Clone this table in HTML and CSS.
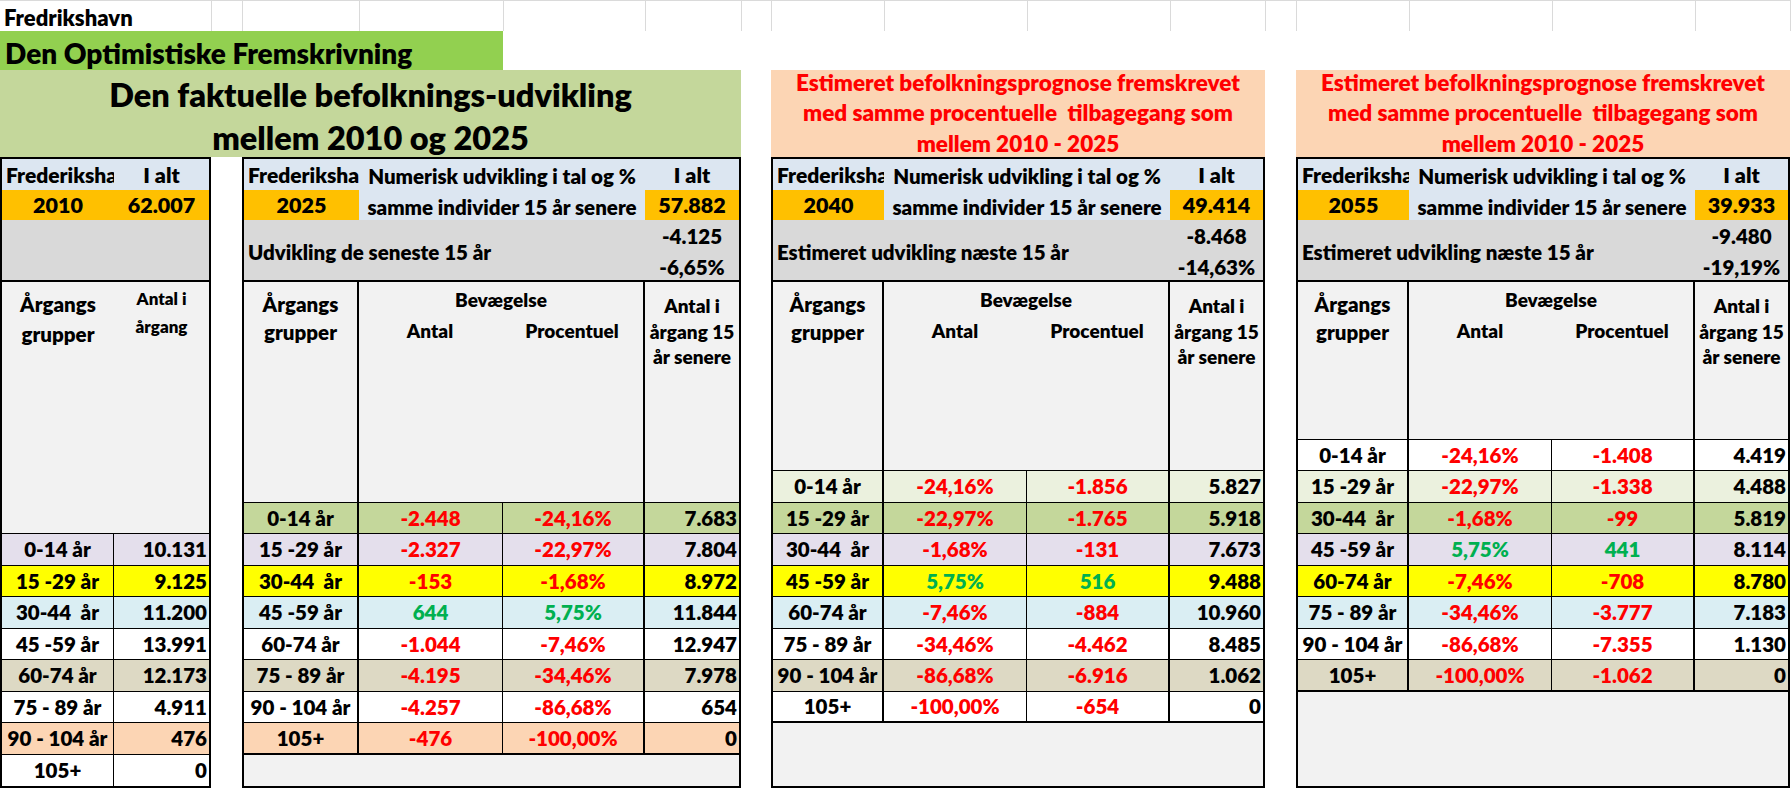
FILE: index.html
```html
<!DOCTYPE html>
<html lang="da">
<head>
<meta charset="utf-8">
<title>Fredrikshavn – Den Optimistiske Fremskrivning</title>
<link rel="stylesheet" href="styles.css">
</head>
<body>
<div class="sheet">
  <div class="row1">
    <div class="r1-first">Fredrikshavn</div>
    <div class="r1-cell w31"></div>
    <div class="r1-cell w117"></div>
    <div class="r1-cell w144"></div>
    <div class="r1-cell w142"></div>
    <div class="r1-cell w96"></div>
    <div class="r1-cell w30"></div>
    <div class="r1-cell w113"></div>
    <div class="r1-cell w143"></div>
    <div class="r1-cell w143"></div>
    <div class="r1-cell w95"></div>
    <div class="r1-cell w31"></div>
    <div class="r1-cell w113"></div>
    <div class="r1-cell w143"></div>
    <div class="r1-cell w143"></div>
    <div class="r1-cell w95"></div>
    <div class="r1-cell w1"></div>
  </div>

  <div class="row2"><div class="green-bar">Den Optimistiske Fremskrivning</div></div>

  <div class="main">
    <section class="group-left">
      <div class="title-box">Den faktuelle befolknings-udvikling<br>mellem 2010 og 2025</div>
      <div class="pair">
        <!-- Table 1 -->
        <div class="tbl t1">
          <div class="c-name">Frederiksha</div>
          <div class="c-key">I alt</div>
          <div class="c-year">2010</div>
          <div class="c-year">62.007</div>
          <div class="c-gray span2"></div>
          <div class="h1-group">Årgangs<br>grupper</div>
          <div class="h1-count">Antal i<br>årgang</div>

          <div class="row lav"><div class="d1">0-14 år</div><div class="d1n">10.131</div></div>
          <div class="row yel"><div class="d1">15 -29 år</div><div class="d1n">9.125</div></div>
          <div class="row aqua"><div class="d1">30-44  år</div><div class="d1n">11.200</div></div>
          <div class="row wht"><div class="d1">45 -59 år</div><div class="d1n">13.991</div></div>
          <div class="row tan"><div class="d1">60-74 år</div><div class="d1n">12.173</div></div>
          <div class="row wht"><div class="d1">75 - 89 år</div><div class="d1n">4.911</div></div>
          <div class="row pch"><div class="d1">90 - 104 år</div><div class="d1n">476</div></div>
          <div class="row wht last"><div class="d1">105+</div><div class="d1n">0</div></div>
        </div>

        <!-- Table 2 -->
        <div class="tbl t2">
          <div class="c-name">Frederiksha</div>
          <div class="c-desc span2">Numerisk udvikling i tal og %</div>
          <div class="c-key">I alt</div>
          <div class="c-year">2025</div>
          <div class="c-desc span2">samme individer 15 år senere</div>
          <div class="c-year">57.882</div>
          <div class="c-gray span3">Udvikling de seneste 15 år</div>
          <div class="c-vals"><span>-4.125</span><span>-6,65%</span></div>
          <div class="h-group">Årgangs<br>grupper</div>
          <div class="h-move span2">
            <div class="h-move-title">Bevægelse</div>
            <div class="h-move-sub"><span>Antal</span><span>Procentuel</span></div>
          </div>
          <div class="h-count">Antal i<br>årgang 15<br>år senere</div>

          <div class="row olv"><div class="d">0-14 år</div><div class="d neg">-2.448</div><div class="d neg">-24,16%</div><div class="dn">7.683</div></div>
          <div class="row lav"><div class="d">15 -29 år</div><div class="d neg">-2.327</div><div class="d neg">-22,97%</div><div class="dn">7.804</div></div>
          <div class="row yel"><div class="d">30-44  år</div><div class="d neg">-153</div><div class="d neg">-1,68%</div><div class="dn">8.972</div></div>
          <div class="row aqua"><div class="d">45 -59 år</div><div class="d pos">644</div><div class="d pos">5,75%</div><div class="dn">11.844</div></div>
          <div class="row wht"><div class="d">60-74 år</div><div class="d neg">-1.044</div><div class="d neg">-7,46%</div><div class="dn">12.947</div></div>
          <div class="row tan"><div class="d">75 - 89 år</div><div class="d neg">-4.195</div><div class="d neg">-34,46%</div><div class="dn">7.978</div></div>
          <div class="row wht"><div class="d">90 - 104 år</div><div class="d neg">-4.257</div><div class="d neg">-86,68%</div><div class="dn">654</div></div>
          <div class="row pch last"><div class="d">105+</div><div class="d neg">-476</div><div class="d neg">-100,00%</div><div class="dn">0</div></div>
          <div class="filler"></div>
        </div>
      </div>
    </section>

    <section class="panel gap30">
      <div class="peach">Estimeret befolkningsprognose fremskrevet<br>med samme procentuelle&nbsp; tilbagegang som<br>mellem 2010 - 2025</div>
      <div class="tbl t3">
        <div class="c-name">Frederiksha</div>
        <div class="c-desc span2">Numerisk udvikling i tal og %</div>
        <div class="c-key">I alt</div>
        <div class="c-year">2040</div>
        <div class="c-desc span2">samme individer 15 år senere</div>
        <div class="c-year">49.414</div>
        <div class="c-gray span3">Estimeret udvikling næste 15 år</div>
        <div class="c-vals"><span>-8.468</span><span>-14,63%</span></div>
        <div class="h-group">Årgangs<br>grupper</div>
        <div class="h-move span2">
          <div class="h-move-title">Bevægelse</div>
          <div class="h-move-sub"><span>Antal</span><span>Procentuel</span></div>
        </div>
        <div class="h-count">Antal i<br>årgang 15<br>år senere</div>

        <div class="row lgr"><div class="d">0-14 år</div><div class="d neg">-24,16%</div><div class="d neg">-1.856</div><div class="dn">5.827</div></div>
        <div class="row olv"><div class="d">15 -29 år</div><div class="d neg">-22,97%</div><div class="d neg">-1.765</div><div class="dn">5.918</div></div>
        <div class="row lav"><div class="d">30-44  år</div><div class="d neg">-1,68%</div><div class="d neg">-131</div><div class="dn">7.673</div></div>
        <div class="row yel"><div class="d">45 -59 år</div><div class="d pos">5,75%</div><div class="d pos">516</div><div class="dn">9.488</div></div>
        <div class="row aqua"><div class="d">60-74 år</div><div class="d neg">-7,46%</div><div class="d neg">-884</div><div class="dn">10.960</div></div>
        <div class="row wht"><div class="d">75 - 89 år</div><div class="d neg">-34,46%</div><div class="d neg">-4.462</div><div class="dn">8.485</div></div>
        <div class="row tan"><div class="d">90 - 104 år</div><div class="d neg">-86,68%</div><div class="d neg">-6.916</div><div class="dn">1.062</div></div>
        <div class="row wht last"><div class="d">105+</div><div class="d neg">-100,00%</div><div class="d neg">-654</div><div class="dn">0</div></div>
        <div class="filler"></div>
      </div>
    </section>

    <section class="panel gap31">
      <div class="peach">Estimeret befolkningsprognose fremskrevet<br>med samme procentuelle&nbsp; tilbagegang som<br>mellem 2010 - 2025</div>
      <div class="tbl t4">
        <div class="c-name">Frederiksha</div>
        <div class="c-desc span2">Numerisk udvikling i tal og %</div>
        <div class="c-key">I alt</div>
        <div class="c-year">2055</div>
        <div class="c-desc span2">samme individer 15 år senere</div>
        <div class="c-year">39.933</div>
        <div class="c-gray span3">Estimeret udvikling næste 15 år</div>
        <div class="c-vals"><span>-9.480</span><span>-19,19%</span></div>
        <div class="h-group">Årgangs<br>grupper</div>
        <div class="h-move span2">
          <div class="h-move-title">Bevægelse</div>
          <div class="h-move-sub"><span>Antal</span><span>Procentuel</span></div>
        </div>
        <div class="h-count">Antal i<br>årgang 15<br>år senere</div>

        <div class="row wht"><div class="d">0-14 år</div><div class="d neg">-24,16%</div><div class="d neg">-1.408</div><div class="dn">4.419</div></div>
        <div class="row lgr"><div class="d">15 -29 år</div><div class="d neg">-22,97%</div><div class="d neg">-1.338</div><div class="dn">4.488</div></div>
        <div class="row olv"><div class="d">30-44  år</div><div class="d neg">-1,68%</div><div class="d neg">-99</div><div class="dn">5.819</div></div>
        <div class="row lav"><div class="d">45 -59 år</div><div class="d pos">5,75%</div><div class="d pos">441</div><div class="dn">8.114</div></div>
        <div class="row yel"><div class="d">60-74 år</div><div class="d neg">-7,46%</div><div class="d neg">-708</div><div class="dn">8.780</div></div>
        <div class="row aqua"><div class="d">75 - 89 år</div><div class="d neg">-34,46%</div><div class="d neg">-3.777</div><div class="dn">7.183</div></div>
        <div class="row wht"><div class="d">90 - 104 år</div><div class="d neg">-86,68%</div><div class="d neg">-7.355</div><div class="dn">1.130</div></div>
        <div class="row tan last"><div class="d">105+</div><div class="d neg">-100,00%</div><div class="d neg">-1.062</div><div class="dn">0</div></div>
        <div class="filler"></div>
      </div>
    </section>
  </div>
</div>
</body>
</html>
```

FILE: styles.css
```css
* { box-sizing: border-box; }

html, body {
  margin: 0;
  padding: 0;
  background: #ffffff;
}

body {
  font-family: Lato, "Open Sans", "Noto Sans", sans-serif;
  font-weight: 800;
  color: #000000;
  width: 1791px;
  height: 789px;
  overflow: hidden;
}

.sheet {
  display: flex;
  flex-direction: column;
}

/* ---------- row 1 with spreadsheet gridlines ---------- */
.row1 {
  display: flex;
  height: 31px;
  border-top: 1px solid #dadada;
}
.r1-first {
  width: 211px;
  padding-left: 4px;
  font-size: 22px;
  line-height: 34px;
  white-space: nowrap;
}
.r1-cell { border-left: 1px solid #dadada; }
.w1 { width: 1px; }
.w30 { width: 30px; }
.w31 { width: 31px; }
.w95 { width: 95px; }
.w96 { width: 96px; }
.w113 { width: 113px; }
.w117 { width: 117px; }
.w142 { width: 142px; }
.w143 { width: 143px; }
.w144 { width: 144px; }

/* ---------- row 2 ---------- */
.row2 { height: 39px; display: flex; }
.green-bar {
  width: 503px;
  background: #92d050;
  font-size: 28px;
  padding-left: 5px;
  line-height: 44px;
  white-space: nowrap;
  overflow: hidden;
}

/* ---------- main area ---------- */
.main { display: flex; align-items: flex-start; }
.group-left { width: 741px; display: flex; flex-direction: column; }
.panel { width: 494px; display: flex; flex-direction: column; }
.gap30 { margin-left: 30px; }
.gap31 { margin-left: 31px; }

.title-box {
  height: 87px;
  background: #c4d79b;
  text-align: center;
  font-size: 32.5px;
  line-height: 43px;
  padding-top: 3px;
  white-space: nowrap;
}

.peach {
  height: 87px;
  background: #fcd5b4;
  color: #ff0000;
  text-align: center;
  font-size: 22.5px;
  line-height: 30.5px;
  display: flex;
  align-items: center;
  justify-content: center;
  white-space: nowrap;
}

.pair { display: flex; }
.t2 { margin-left: 31px; }

/* ---------- tables ---------- */
.tbl {
  display: grid;
  height: 631px;
  border: 2px solid #000;
  font-size: 20.5px;
}
.t1 {
  width: 211px;
  grid-template-columns: 112px 95px;
  grid-template-rows: 31px 30px 62px 252px repeat(8, 31.5px);
}
.t2 {
  width: 499px;
  grid-template-columns: 115px 144px 142px 94px;
  grid-template-rows: 31px 30px 62px 220.5px repeat(8, 31.5px) 1fr;
}
.t3, .t4 {
  width: 494px;
  grid-template-columns: 111px 143px 143px 93px;
}
.t3 { grid-template-rows: 31px 30px 62px 189px repeat(8, 31.5px) 1fr; }
.t4 { grid-template-rows: 31px 30px 62px 157.5px repeat(8, 31.5px) 1fr; }

.span2 { grid-column: span 2; }
.span3 { grid-column: span 3; }

.c-name, .c-key, .c-desc, .c-year {
  display: flex;
  align-items: center;
  white-space: nowrap;
  overflow: hidden;
}
.c-name {
  background: #dce6f1;
  font-size: 21px;
  padding-left: 4px;
}
.c-key {
  background: #dce6f1;
  font-size: 21.5px;
  justify-content: center;
}
.c-desc {
  background: #dce6f1;
  justify-content: center;
  padding-top: 3px;
}
.c-year {
  background: #ffc000;
  font-size: 21.5px;
  justify-content: center;
}

.c-gray {
  background: #d9d9d9;
  border-bottom: 2px solid #000;
  display: flex;
  align-items: center;
  padding: 4px 0 0 4px;
  white-space: nowrap;
}
.c-vals {
  background: #d9d9d9;
  border-bottom: 2px solid #000;
  display: flex;
  flex-direction: column;
  align-items: center;
  line-height: 31px;
  padding-top: 1px;
}

/* header area */
.h-group, .h-move, .h-count, .h1-group, .h1-count {
  background: #f2f2f2;
  border-bottom: 1px solid #000;
  text-align: center;
}
.h-group {
  border-right: 2px solid #000;
  line-height: 28px;
  padding-top: 8px;
}
.h-move {
  border-right: 2px solid #000;
  font-size: 19px;
  line-height: 31px;
  padding-top: 2px;
}
.h-move-sub {
  display: grid;
  grid-template-columns: 1fr 1fr;
}
.h-count {
  font-size: 19px;
  line-height: 25.5px;
  padding-top: 11px;
}
.h1-group {
  line-height: 30px;
  padding-top: 7px;
}
.h1-count {
  font-size: 17px;
  line-height: 28px;
  padding-top: 3px;
}

/* data rows */
.row { display: contents; }
.d, .dn, .d1, .d1n {
  display: flex;
  align-items: center;
  white-space: pre;
  border-bottom: 1px solid #000;
}
.d { justify-content: center; }
.d:nth-child(1) { border-right: 2px solid #000; }
.d:nth-child(2) { border-right: 1px solid #000; }
.d:nth-child(3) { border-right: 2px solid #000; }
.dn { justify-content: flex-end; padding-right: 2px; }
.d1 { justify-content: center; border-right: 1px solid #000; }
.d1n { justify-content: flex-end; padding-right: 2px; }

.last > .d, .last > .dn { border-bottom: 2px solid #000; }
.t1 .last > div { border-bottom: 0; }

.neg { color: #ff0000; }
.pos { color: #00b050; }

.filler { grid-column: 1 / -1; background: #f2f2f2; }

/* row colours */
.lav > * { background: #e4dfec; }
.yel > * { background: #ffff00; }
.aqua > * { background: #daeef3; }
.wht > * { background: #ffffff; }
.tan > * { background: #ddd9c4; }
.pch > * { background: #fcd5b4; }
.olv > * { background: #c4d79b; }
.lgr > * { background: #ebf1de; }
```
